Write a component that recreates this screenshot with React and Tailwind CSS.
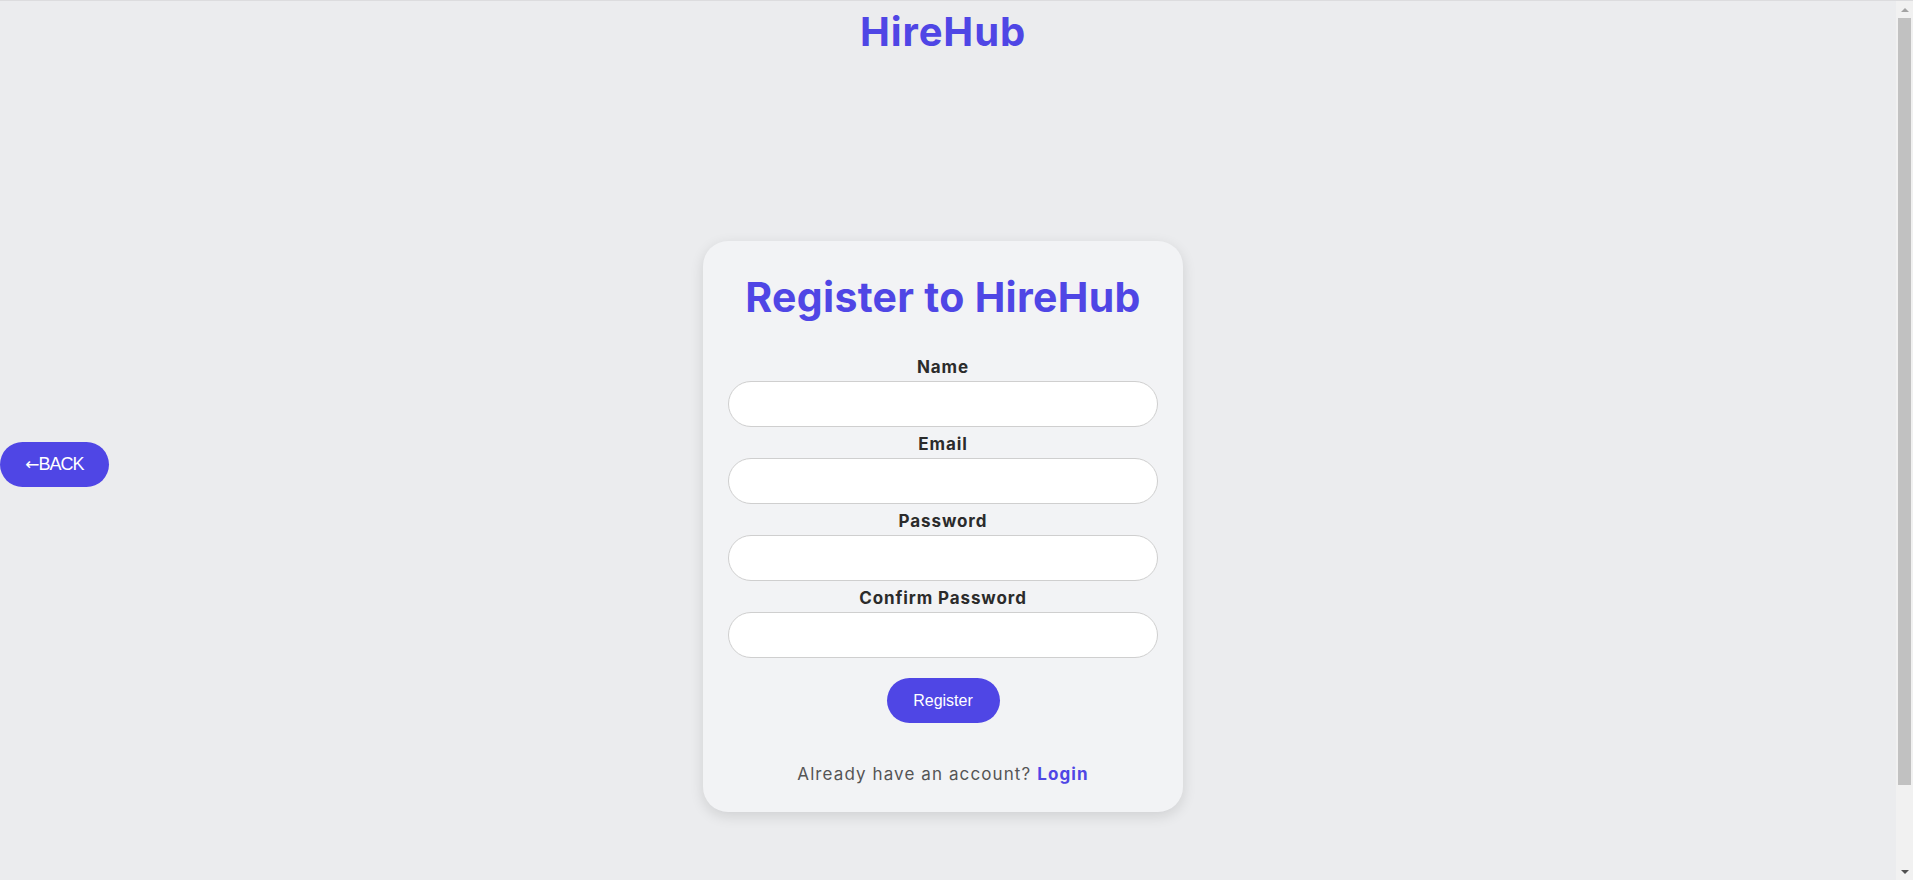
import React from "react";

const sans = { fontFamily: "Inter, 'Noto Sans', sans-serif" };

function Field({ label, type = "text" }) {
  return (
    <div className="flex flex-col items-center">
      <label className="mt-[5px] mb-[2px] text-[17px] leading-[24px] font-bold text-[#2b2b2b] tracking-[0.9px]">
        {label}
      </label>
      <input
        type={type}
        className="w-full h-[46px] rounded-full border border-[#cfcfcf] bg-white px-5 outline-none"
      />
    </div>
  );
}

function Scrollbar() {
  return (
    <div className="w-[17px] h-full bg-[#f1f1f1] flex flex-col items-center shrink-0">
      <div className="h-[17px] w-full flex items-center justify-center">
        <div className="w-0 h-0 border-l-[4px] border-r-[4px] border-b-[4px] border-l-transparent border-r-transparent border-b-[#a3a3a3]" />
      </div>
      <div className="w-[13px] h-[767px] bg-[#c1c1c1]" />
      <div className="flex-1" />
      <div className="h-[17px] w-full flex items-center justify-center">
        <div className="w-0 h-0 border-l-[4px] border-r-[4px] border-t-[4px] border-l-transparent border-r-transparent border-t-[#505050]" />
      </div>
    </div>
  );
}

export default function App() {
  return (
    <div className="h-screen w-full flex bg-[#ebecee] border-t border-[#dcdcde] overflow-hidden" style={sans}>
      <div className="relative flex-1 flex flex-col items-center pr-[10px]">
        {/* header */}
        <h1 className="mt-[7px] text-[40px] leading-[48px] font-bold text-[#4f46e5] tracking-[0.9px]">
          HireHub
        </h1>

        {/* back button */}
        <button
          className="absolute left-0 top-[441px] w-[109px] h-[45px] rounded-full bg-[#4f46e5] text-white text-[18px] tracking-[-1px] flex items-center justify-center"
          style={{ fontFamily: "'Liberation Sans', Arial, sans-serif" }}
        >
          <span className="text-[17px]" style={{ fontFamily: "'DejaVu Sans', sans-serif" }}>←</span>
          BACK
        </button>

        {/* register card */}
        <div className="mt-[185px] w-[480px] bg-[#f2f3f5] rounded-[25px] px-[25px] pt-[28px] pb-[26px] shadow-[0_4px_14px_rgba(0,0,0,0.12)]">
          <h2 className="text-center text-[41px] leading-[56px] font-bold text-[#4f46e5] tracking-[0.3px] mb-[25px]">
            Register to HireHub
          </h2>

          <form className="flex flex-col" onSubmit={(e) => e.preventDefault()}>
            <Field label="Name" />
            <Field label="Email" type="email" />
            <Field label="Password" type="password" />
            <Field label="Confirm Password" type="password" />

            <div className="flex justify-center mt-[20px]">
              <button
                type="submit"
                className="w-[113px] h-[45px] rounded-full bg-[#4f46e5] text-white text-[16px]"
                style={{ fontFamily: "'Liberation Sans', Arial, sans-serif" }}
              >
                Register
              </button>
            </div>
          </form>

          <p className="mt-[39px] text-center text-[17px] leading-[24px] text-[#555] tracking-[1.1px]">
            Already have an account?{" "}
            <a href="#" className="font-bold text-[#4f46e5]">
              Login
            </a>
          </p>
        </div>
      </div>
      <Scrollbar />
    </div>
  );
}
